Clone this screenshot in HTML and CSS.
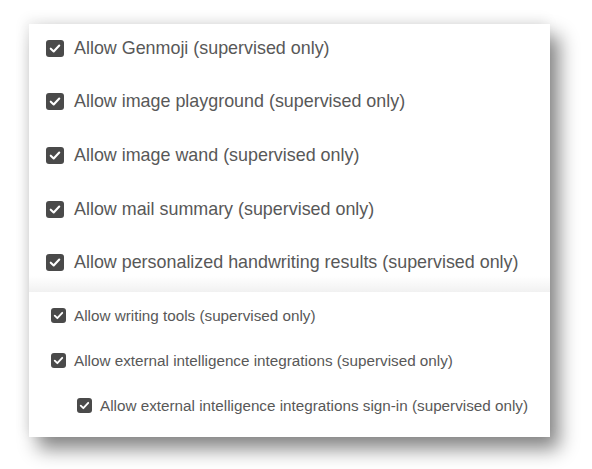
FILE: index.html
```html
<!DOCTYPE html>
<html>
<head>
<meta charset="utf-8">
<link rel="stylesheet" href="styles.css">
</head>
<body>
<div class="card">
  <div class="section section-large">
    <div class="row"><span class="box"><svg viewBox="0 0 18 18"><path d="M4.5 9.2 L7.6 12.2 L13.5 5.8" /></svg></span><span>Allow Genmoji (supervised only)</span></div>
    <div class="row"><span class="box"><svg viewBox="0 0 18 18"><path d="M4.5 9.2 L7.6 12.2 L13.5 5.8" /></svg></span><span>Allow image playground (supervised only)</span></div>
    <div class="row"><span class="box"><svg viewBox="0 0 18 18"><path d="M4.5 9.2 L7.6 12.2 L13.5 5.8" /></svg></span><span>Allow image wand (supervised only)</span></div>
    <div class="row"><span class="box"><svg viewBox="0 0 18 18"><path d="M4.5 9.2 L7.6 12.2 L13.5 5.8" /></svg></span><span>Allow mail summary (supervised only)</span></div>
    <div class="row"><span class="box"><svg viewBox="0 0 18 18"><path d="M4.5 9.2 L7.6 12.2 L13.5 5.8" /></svg></span><span>Allow personalized handwriting results (supervised only)</span></div>
  </div>
  <div class="section section-small">
    <div class="row"><span class="box"><svg viewBox="0 0 18 18"><path d="M4.5 9.2 L7.6 12.2 L13.5 5.8" /></svg></span><span>Allow writing tools (supervised only)</span></div>
    <div class="row"><span class="box"><svg viewBox="0 0 18 18"><path d="M4.5 9.2 L7.6 12.2 L13.5 5.8" /></svg></span><span>Allow external intelligence integrations (supervised only)</span></div>
    <div class="row indent"><span class="box"><svg viewBox="0 0 18 18"><path d="M4.5 9.2 L7.6 12.2 L13.5 5.8" /></svg></span><span>Allow external intelligence integrations sign-in (supervised only)</span></div>
  </div>
</div>
</body>
</html>
```

FILE: styles.css
```css
html, body {
  margin: 0;
  padding: 0;
  background: #ffffff;
}
body {
  padding: 24px 0 32px 29px;
  min-height: 469px;
  box-sizing: border-box;
  font-family: "Liberation Sans", Arial, Helvetica, sans-serif;
  color: #585858;
}
.card {
  width: 521px;
  background: #ffffff;
  box-shadow: 9px 12px 18px rgba(0, 0, 0, 0.48), -3px -4px 12px rgba(0, 0, 0, 0.08);
}
.section {
  display: flex;
  flex-direction: column;
}
.section-large {
  height: 268px;
  box-sizing: border-box;
  padding: 14px 0 0 17px;
  gap: 33.7px;
  font-size: 17.9px;
  background: linear-gradient(to bottom, #ffffff 0, #ffffff 252px, #f1f1f1 268px);
}
.section-small {
  height: 145px;
  box-sizing: border-box;
  padding: 14px 0 0 22px;
  gap: 27px;
  font-size: 15.25px;
}
.row {
  display: flex;
  align-items: center;
  white-space: nowrap;
}
.section-large .row {
  height: 20px;
  gap: 10px;
}
.section-small .row {
  height: 18px;
  gap: 8px;
}
.row.indent {
  padding-left: 26px;
}
.box {
  display: inline-flex;
  background: #4a4a4a;
  border-radius: 3px;
  flex: none;
}
.section-large .box {
  width: 18px;
  height: 17px;
}
.section-small .box {
  width: 15px;
  height: 15px;
}
.box svg {
  width: 100%;
  height: 100%;
  fill: none;
  stroke: #ffffff;
  stroke-width: 2.2;
  stroke-linecap: round;
  stroke-linejoin: round;
}
```
